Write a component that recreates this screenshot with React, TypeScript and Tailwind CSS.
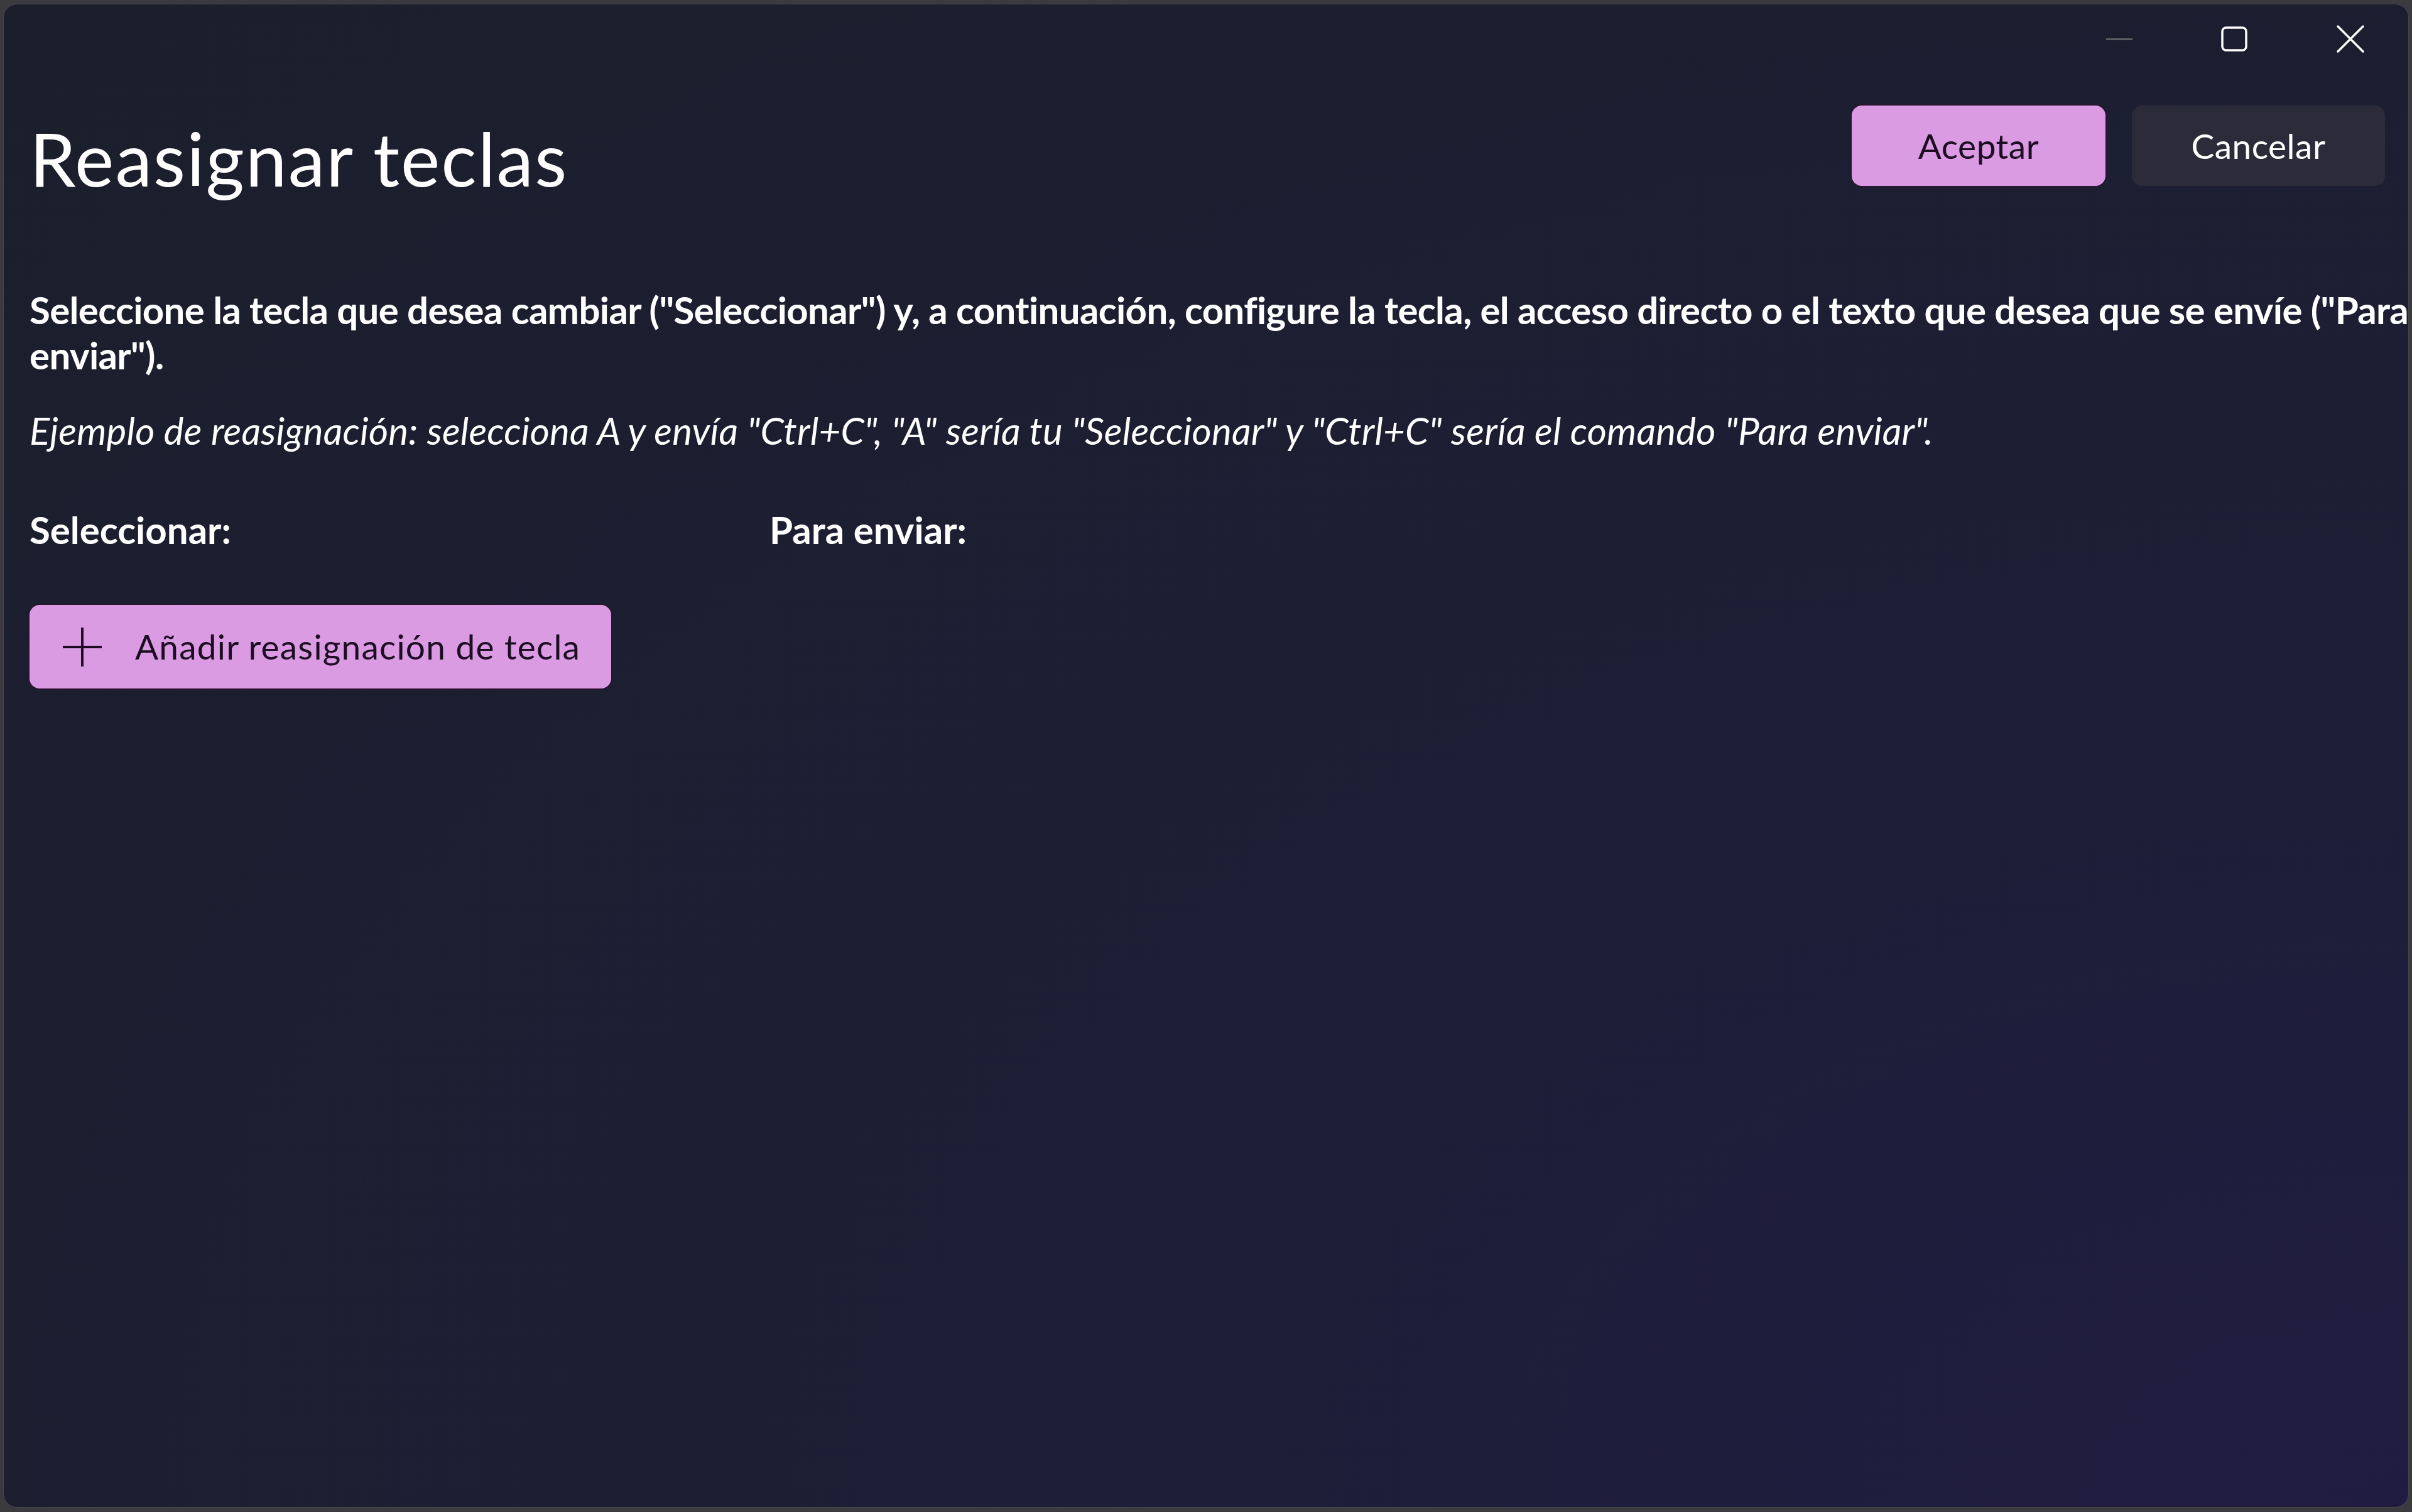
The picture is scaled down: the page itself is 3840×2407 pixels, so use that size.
import React from "react";

export default function App() {
  return (
    <div className="w-[3840px] h-[2407px] bg-[#3b3b3f] pt-[6px] pl-[5px] pr-[5px] pb-[7px] font-[Lato,sans-serif] overflow-hidden">
      <div className="w-full h-full rounded-[22px] overflow-hidden border border-[#45454b] bg-[radial-gradient(ellipse_at_100%_100%,#201c41_0%,#1d1e34_50%,#1b1f2b_100%)] flex flex-col">
        {/* title bar */}
        <div className="h-[110px] flex justify-end items-center shrink-0">
          <div className="w-[184px] h-full flex items-center justify-center">
            <div className="w-[42px] h-[3px] bg-[#5c5c63]" />
          </div>
          <div className="w-[184px] h-full flex items-center justify-center">
            <svg width="46" height="42" viewBox="0 0 46 42">
              <rect x="3" y="3" width="38" height="36" rx="6" fill="none" stroke="#ffffff" strokeWidth="3.5" />
            </svg>
          </div>
          <div className="w-[184px] h-full flex items-center justify-center">
            <svg width="46" height="46" viewBox="0 0 46 46">
              <path d="M3 3 L43 43 M43 3 L3 43" stroke="#ffffff" strokeWidth="3.5" strokeLinecap="round" />
            </svg>
          </div>
        </div>

        <div className="flex flex-col pl-[41px] pr-[37px] whitespace-nowrap">
          {/* header */}
          <div className="flex justify-between items-start">
            <h1 className="mt-[76px] text-[118px] leading-none font-normal text-white tracking-[2px]">
              Reasignar teclas
            </h1>
            <div className="flex gap-[42px] mt-[51px]">
              <button className="w-[404px] h-[128px] rounded-[16px] bg-[#da9be2] ring-2 ring-[#2a1532] text-[55px] tracking-[0.5px] text-[#1c0d22] flex items-center justify-center">
                Aceptar
              </button>
              <button className="w-[403px] h-[128px] rounded-[16px] bg-[#2b2b39] text-[55px] tracking-[0.5px] text-white flex items-center justify-center">
                Cancelar
              </button>
            </div>
          </div>

          {/* description */}
          <p className="mt-[146px] text-[60px] leading-[72px] font-bold text-white tracking-[-0.65px]">
            Seleccione la tecla que desea cambiar ("Seleccionar") y, a continuación, configure la tecla, el acceso directo o el texto que desea que se envíe ("Para
            <br />
            enviar").
          </p>
          <p className="mt-[48px] text-[60px] leading-[72px] italic text-white tracking-[0.2px]">
            Ejemplo de reasignación: selecciona A y envía "Ctrl+C", "A" sería tu "Seleccionar" y "Ctrl+C" sería el comando "Para enviar".
          </p>

          {/* labels */}
          <div className="mt-[86px] flex text-[60px] leading-[72px] font-bold text-white">
            <div className="w-[1178px]">Seleccionar:</div>
            <div>Para enviar:</div>
          </div>

          {/* add button */}
          <div className="mt-[84px]">
            <button className="w-[926px] h-[133px] rounded-[16px] bg-[#da9be2] ring-2 ring-[#2a1532] flex items-center pl-[51px] text-[55px] tracking-[1.2px] text-[#1c0d22]">
              <svg width="66" height="66" viewBox="0 0 66 66" className="shrink-0">
                <path d="M33 2 V64 M2 33 H64" stroke="#1c0d22" strokeWidth="4" />
              </svg>
              <span className="ml-[51px]">Añadir reasignación de tecla</span>
            </button>
          </div>
        </div>
      </div>
    </div>
  );
}
